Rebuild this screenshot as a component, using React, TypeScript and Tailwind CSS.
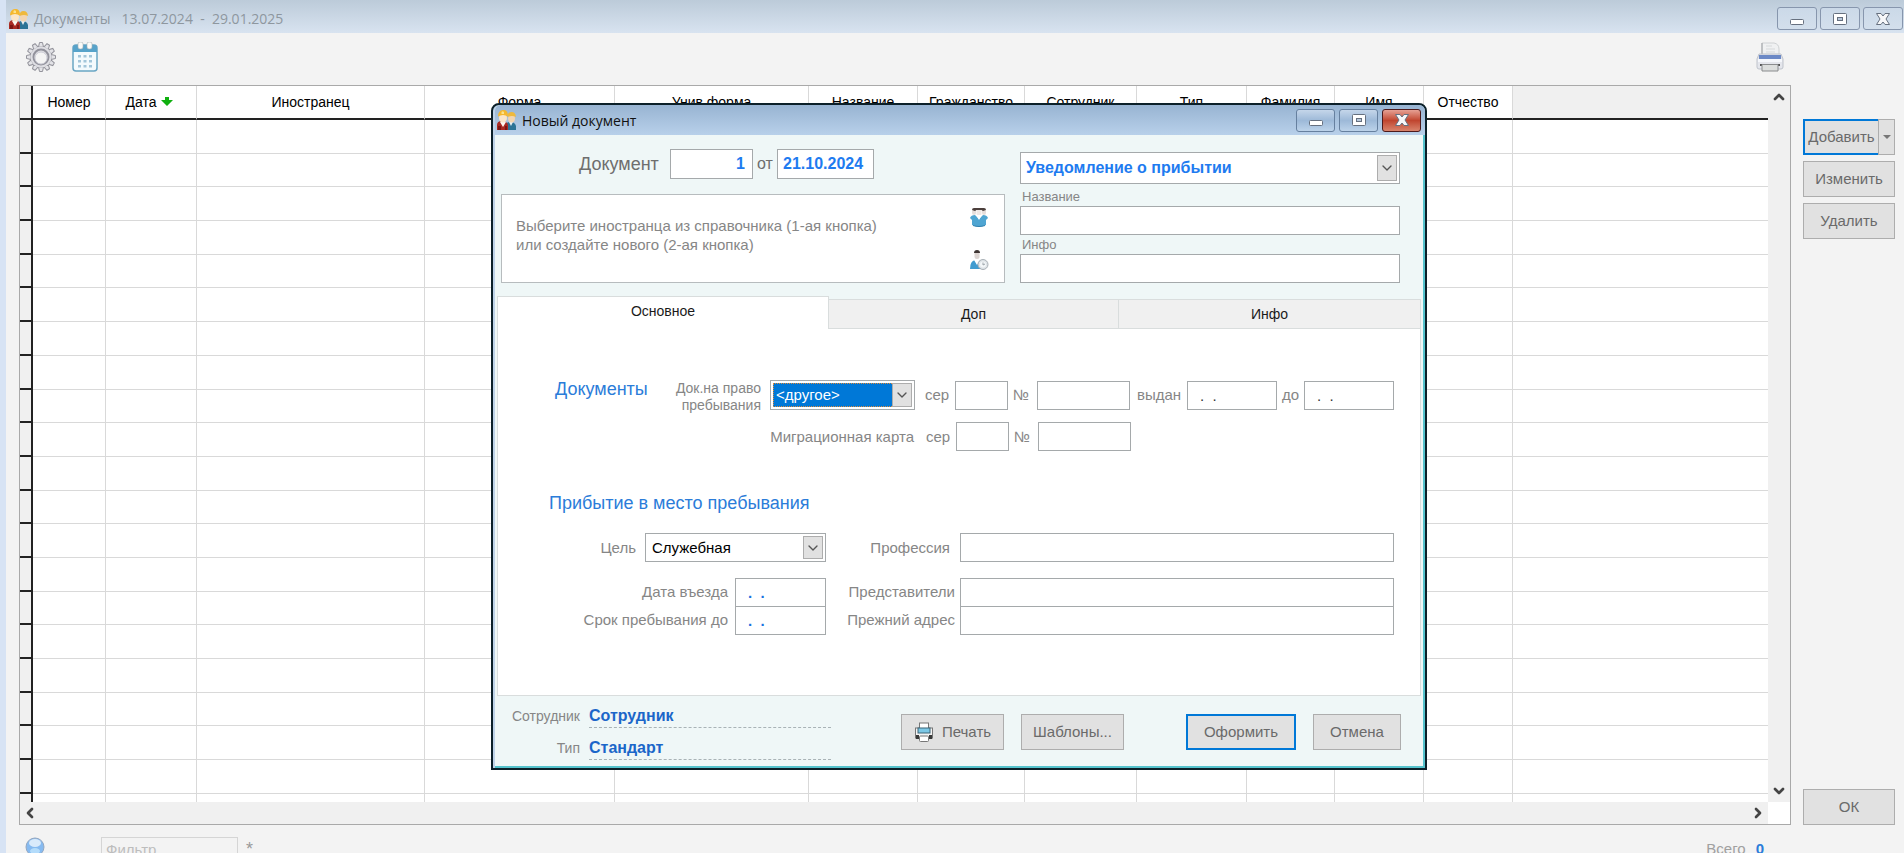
import React, { useState } from "react";
import { ChevronDown, ChevronLeft, ChevronRight, ChevronUp } from "lucide-react";

const columns = [
  { title: "Номер", width: "w-[73px]" },
  { title: "Дата", width: "w-[91px]", sorted: true },
  { title: "Иностранец", width: "w-[228px]" },
  { title: "Форма", width: "w-[190px]" },
  { title: "Унив.форма", width: "w-[194px]" },
  { title: "Название", width: "w-[109px]" },
  { title: "Гражданство", width: "w-[107px]" },
  { title: "Сотрудник", width: "w-[112px]" },
  { title: "Тип", width: "w-[110px]" },
  { title: "Фамилия", width: "w-[88px]" },
  { title: "Имя", width: "w-[89px]" },
  { title: "Отчество", width: "w-[89px]" },
];

const rows = Array.from({ length: 20 }, (_, i) => i);

const tabs = [
  { id: "main", label: "Основное", width: "w-[332px]" },
  { id: "extra", label: "Доп", width: "w-[290px]" },
  { id: "info", label: "Инфо", width: "flex-1" },
];

const field = "h-[29px] border border-[#a5a9ab] bg-white outline-none";
const label = "text-[15px] leading-[18px] text-[#868686] whitespace-nowrap";
const button =
  "h-9 border border-[#adadad] bg-[#e1e1e1] text-[15px] text-[#6a6a6a] whitespace-nowrap flex items-center justify-center";

/* ---------- Icons ---------- */

const PeopleIcon: React.FC = () => (
  <svg className="h-5 w-5 shrink-0" viewBox="0 0 20 20">
    <path d="M9 20v-5q0-3 4-3 5 0 6 4v4z" fill="#2c7396" />
    <path d="M12 12l2 4 2-4z" fill="#e9eef0" />
    <ellipse cx="14.500" cy="8.500" rx="3.500" ry="4" fill="#f3d5b0" />
    <path d="M10.500 7q0-5 4-5t4.500 5q-4-2-8.500 0z" fill="#efb93c" />
    <path d="M0 20v-5q0-4 5-4t6 4v5z" fill="#a92a22" />
    <path d="M3 12l3 5 3-5z" fill="#fdf7f0" />
    <path d="M1 16h3v4H1zM8 16h2v4H8z" fill="#7d1714" />
    <ellipse cx="6" cy="8" rx="4" ry="4.500" fill="#fbe6c9" />
    <path d="M1 6.500q0-6 5-6.500t5 6.500Q6 3.500 1 6.500z" fill="#f5b82e" />
    <path d="M4.500 2q1-1.500 2.500 0v2h-2.500z" fill="#fde28a" />
  </svg>
);

const GearIcon: React.FC = () => (
  <svg className="h-8 w-8" viewBox="0 0 32 32">
    <g fill="#e3e3e7" stroke="#93939b" strokeWidth="1">
      {[0, 30, 60, 90, 120, 150, 180, 210, 240, 270, 300, 330].map((a) => (
        <path key={a} d="M13.500 6l1-4.500h3l1 4.500z" transform={`rotate(${a} 16 16)`} />
      ))}
    </g>
    <circle cx="16" cy="16" r="10.500" fill="#dedee3" />
    <circle cx="16" cy="16" r="7.500" fill="none" stroke="#92929c" strokeWidth="2" />
    <circle cx="16" cy="17" r="6" fill="#f4f4f4" stroke="#cdcdd6" />
  </svg>
);

const CalendarIcon: React.FC = () => (
  <svg className="h-[30px] w-[26px]" viewBox="0 0 26 30">
    <rect x="1" y="3" width="24" height="26" rx="3" fill="#f3fafd" stroke="#6aa6c4" strokeWidth="1.500" />
    <path d="M1 10V6q0-3 3-3h18q3 0 3 3v4z" fill="#57a3ca" />
    <rect x="6" y="0" width="5" height="7" rx="2" fill="#fbfbf8" stroke="#a9b3b6" strokeWidth=".6" />
    <rect x="15" y="0" width="5" height="7" rx="2" fill="#fbfbf8" stroke="#a9b3b6" strokeWidth=".6" />
    {[13, 18, 23].map((y) =>
      [6, 11.5, 17].map((x) => <rect key={`${x}-${y}`} x={x} y={y} width="3" height="2.500" fill="#a3c6da" />)
    )}
  </svg>
);

const PrinterLarge: React.FC = () => (
  <svg className="h-[30px] w-7" viewBox="0 0 28 30">
    <path d="M6 1h12q5 1 5 6v6H6z" fill="#f0f1f2" stroke="#ced1d3" />
    <path d="M6 1v12" stroke="#9da1a4" />
    <path d="M10 4h6M10 7h9M10 10h9" stroke="#d6d9db" />
    <path d="M3 12h22l2 5v8q0 2-2 2H3q-2 0-2-2v-8z" fill="#e4e6ec" stroke="#bfc3cb" />
    <path d="M3 13h22v4H3z" fill="#6c89c6" />
    <path d="M2 17h24v3H2z" fill="#f5f7fb" />
    <path d="M4 22h2v2H4zM22 22h2v2h-2z" fill="#555" />
    <path d="M6 22.500h16V29H6z" fill="#dcdedd" stroke="#8a8c8e" />
  </svg>
);

const PrinterSmall: React.FC = () => (
  <svg className="h-5 w-5" viewBox="0 0 20 20">
    <rect x="1.500" y="6" width="17" height="10" fill="#f4f4f4" stroke="#777" />
    <rect x="5.500" y="1" width="9" height="6" fill="#fff" stroke="#777" />
    <rect x="4" y="6" width="12" height="5" fill="#7cc8e6" stroke="#3d6477" />
    <path d="M2 13h3v4H2zM15 13h3v4h-3z" fill="#3a3a3a" />
    <rect x="5.500" y="14" width="9" height="5.500" rx="1" fill="#fff" stroke="#777" />
  </svg>
);

const GroupIcon: React.FC = () => (
  <svg className="h-5 w-5" viewBox="0 0 20 20">
    <rect x="3" y="2" width="4" height="6" rx="2" fill="#e6dedb" />
    <rect x="13" y="2" width="4" height="6" rx="2" fill="#e6dedb" />
    <rect x="7.500" y="2" width="5" height="7" rx="2" fill="#efe8e5" />
    <path d="M3 3q0-2 2-2h10q2 0 2 2l-3 1-1.500-1h-5L6 4z" fill="#4b3f3c" />
    <path d="M1 11q1-3 5-3l4 4 4-4q4 0 5 3l-2 2v5q-7 3-14 0v-5z" fill="#4fa5d2" />
    <path d="M7 8l3 5 3-5z" fill="#fff" />
    <path d="M4 18q6 2 12 0v1q-6 2-12 0z" fill="#2f7fae" />
  </svg>
);

const PersonIcon: React.FC = () => (
  <svg className="h-5 w-5" viewBox="0 0 20 20">
    <path d="M1 19q0-8 5-9h4q4 1 4 9z" fill="#3f9bd0" />
    <path d="M5 10l3 5 3-5z" fill="#fff" />
    <rect x="5.500" y="1" width="5" height="8" rx="2.500" fill="#ddd5d2" />
    <path d="M5 3q0-3 3-3t3 3z" fill="#3f3634" />
    <circle cx="14" cy="14.500" r="5" fill="#dfe4e8" stroke="#a9b0b6" />
    <circle cx="14" cy="14.500" r="3" fill="#f3f6f8" />
    <path d="M14 12.500v2.500l2-1" fill="none" stroke="#9da5ab" />
  </svg>
);

/* ---------- Shared parts ---------- */

const MinimizeGlyph: React.FC = () => (
  <svg className="h-4 w-4" viewBox="0 0 16 16">
    <rect x="1.500" y="8.500" width="13" height="5" rx="1" fill="#fff" stroke="#66707f" />
  </svg>
);

const MaximizeGlyph: React.FC = () => (
  <svg className="h-4 w-4" viewBox="0 0 16 16">
    <rect x="1.500" y="2.500" width="13" height="11" rx="1" fill="#fff" stroke="#66707f" />
    <rect x="5.500" y="6.500" width="5" height="3" fill="#b9c9dc" stroke="#66707f" />
  </svg>
);

const CloseGlyph: React.FC = () => (
  <svg className="h-4 w-4" viewBox="0 0 16 16">
    <path
      d="M1.500 2.500h4.500l2 2.500 2-2.500h4.500L11 8l3.500 5.500H10L8 11l-2 2.500H1.500L5 8z"
      fill="#f6f7f9"
      stroke="#66707f"
    />
  </svg>
);

type SelectProps = {
  id: string;
  name: string;
  options: string[];
  className: string;
  selectClass: string;
};

const Select: React.FC<SelectProps> = ({ id, name, options, className, selectClass }) => (
  <div className={`relative border border-[#a5a9ab] bg-white p-[2px] ${className}`}>
    <select id={id} aria-label={name} className={`h-full w-full appearance-none outline-none ${selectClass}`}>
      {options.map((option) => (
        <option key={option}>{option}</option>
      ))}
    </select>
    <span className="pointer-events-none absolute inset-y-[2px] right-[2px] flex w-5 items-center justify-center border border-[#adadad] bg-[#e1e1e1]">
      <ChevronDown className="h-4 w-4 text-[#555]" />
    </span>
  </div>
);

const MainTab: React.FC = () => (
  <div className="pr-[26px]">
    <div className="mt-[51px] flex items-start">
      <h2 className="ml-[57px] w-[96px] text-lg leading-[18px] text-[#2b7cd9]">Документы</h2>
      <label htmlFor="permit" className="ml-auto w-[96px] text-right text-sm leading-[17px] text-[#868686]">
        Док.на право пребывания
      </label>
      <div className="ml-[9px] flex items-center">
        <Select
          id="permit"
          name="Док.на право пребывания"
          options={["<другое>"]}
          className="h-[30px] w-[145px]"
          selectClass="border border-dotted border-[#e08b3a] bg-[#0078d7] pl-[2px] text-[15px] text-white"
        />
        <label htmlFor="permit-series" className={`${label} ml-[10px] w-[30px]`}>сер</label>
        <input id="permit-series" className={`${field} w-[53px]`} />
        <label htmlFor="permit-number" className={`${label} ml-[5px] w-6`}>№</label>
        <input id="permit-number" className={`${field} w-[93px]`} />
        <label htmlFor="issued" className={`${label} ml-[7px] w-[50px]`}>выдан</label>
        <input id="issued" defaultValue=".  ." className={`${field} w-[90px] px-3 text-[15px] text-[#333]`} />
        <label htmlFor="valid-to" className={`${label} ml-[5px] w-[22px]`}>до</label>
        <input id="valid-to" defaultValue=".  ." className={`${field} w-[90px] px-3 text-[15px] text-[#333]`} />
      </div>
    </div>

    <div className="mt-2 flex items-center justify-end pr-[263px]">
      <span className={label}>Миграционная карта</span>
      <label htmlFor="card-series" className={`${label} ml-3 w-[30px]`}>сер</label>
      <input id="card-series" className={`${field} w-[53px]`} />
      <label htmlFor="card-number" className={`${label} ml-[5px] w-6`}>№</label>
      <input id="card-number" className={`${field} w-[93px]`} />
    </div>

    <h2 className="mt-[42px] pl-[51px] text-lg leading-5 text-[#2b7cd9]">Прибытие в место пребывания</h2>

    <div className="mt-5 flex items-center">
      <label htmlFor="purpose" className={`${label} w-[138px] text-right`}>Цель</label>
      <Select
        id="purpose"
        name="Цель"
        options={["Служебная"]}
        className="ml-[9px] h-[29px] w-[181px]"
        selectClass="bg-white pl-1 text-[15px] text-black"
      />
      <label htmlFor="profession" className={`${label} ml-3 w-[112px] text-right`}>Профессия</label>
      <input id="profession" className={`${field} ml-[10px] min-w-0 flex-1`} />
    </div>

    <div className="mt-4 flex">
      <div className="w-[230px] text-right">
        <label htmlFor="entry-date" className={`${label} block leading-[28px]`}>Дата въезда</label>
        <label htmlFor="stay-until" className={`${label} block leading-[28px]`}>Срок пребывания до</label>
      </div>
      <div className="ml-[7px] flex w-[91px] flex-col">
        <input id="entry-date" defaultValue=".  ." className={`${field} px-3 text-[15px] font-bold text-[#1a73e0]`} />
        <input id="stay-until" defaultValue=".  ." className={`${field} -mt-px px-3 text-[15px] font-bold text-[#1a73e0]`} />
      </div>
      <div className="w-[129px] text-right">
        <label htmlFor="representatives" className={`${label} block leading-[28px]`}>Представители</label>
        <label htmlFor="old-address" className={`${label} block leading-[28px]`}>Прежний адрес</label>
      </div>
      <div className="ml-[5px] flex min-w-0 flex-1 flex-col">
        <input id="representatives" className={field} />
        <input id="old-address" className={`${field} -mt-px`} />
      </div>
    </div>
  </div>
);

const DocumentDialog: React.FC = () => {
  const [activeTab, setActiveTab] = useState("main");
  const control =
    "flex h-[23px] w-[39px] items-center justify-center rounded-[3px] border border-[#66809f] bg-linear-to-b from-[#c5d6ea] via-[#9db9d8] to-[#bcd3ea]";

  return (
    <section
      role="dialog"
      aria-label="Новый документ"
      className="absolute left-[485px] top-[103px] flex h-[667px] w-[936px] flex-col rounded-t-lg border-2 border-[#0c2029] bg-[#bfd3e8] pl-[2px]"
    >
      <header className="flex h-[30px] shrink-0 items-center rounded-t-md bg-linear-to-b from-[#98b4d2] to-[#b8d0ea] pl-[2px] pr-1">
        <PeopleIcon />
        <h1 className="ml-[5px] font-['Open_Sans',sans-serif] text-[14px] text-[#111]">Новый документ</h1>
        <div className="ml-auto flex gap-1">
          <button aria-label="Свернуть" className={control}><MinimizeGlyph /></button>
          <button aria-label="Развернуть" className={control}><MaximizeGlyph /></button>
          <button
            aria-label="Закрыть"
            className="flex h-[23px] w-[39px] items-center justify-center rounded-[3px] border border-[#4d1a1c] bg-linear-to-b from-[#e5a094] via-[#c0452f] to-[#d8836c]"
          >
            <CloseGlyph />
          </button>
        </div>
      </header>

      <div className="flex min-h-0 flex-1 flex-col border-b-2 border-r-2 border-[#55c3cd] bg-[#eff7f7]">
        <div className="flex justify-between pl-[6px] pr-[23px] pt-[14px]">
          <div className="w-[504px]">
            <div className="flex items-center pl-[78px]">
              <label htmlFor="doc-number" className="w-[91px] text-lg text-[#6e6e6e]">Документ</label>
              <input
                id="doc-number"
                defaultValue="1"
                className="h-[30px] w-[83px] border border-[#a5a9ab] bg-white px-[7px] text-right text-base font-bold text-[#1e7bf0]"
              />
              <label htmlFor="doc-date" className="ml-[4px] w-[20px] text-base text-[#6e6e6e]">от</label>
              <input
                id="doc-date"
                defaultValue="21.10.2024"
                className="h-[30px] w-[97px] border border-[#a5a9ab] bg-white px-[5px] text-base font-bold text-[#1e7bf0]"
              />
            </div>
            <div className="mt-[15px] flex h-[89px] items-center justify-between border border-[#b7bcbe] bg-white pl-[14px] pr-[15px]">
              <p className="pb-2 text-[15px] leading-[19px] text-[#868686]">
                Выберите иностранца из справочника (1-ая кнопка)
                <br />
                или создайте нового (2-ая кнопка)
              </p>
              <div className="flex flex-col gap-[23px]">
                <button aria-label="Выбрать из справочника"><GroupIcon /></button>
                <button aria-label="Создать нового"><PersonIcon /></button>
              </div>
            </div>
          </div>

          <div className="w-[380px] pt-[3px]">
            <Select
              id="doc-type"
              name="Вид документа"
              options={["Уведомление о прибытии"]}
              className="h-8"
              selectClass="bg-white pl-[3px] text-base font-bold text-[#1e7bf0]"
            />
            <label htmlFor="doc-name" className="mt-1 block pl-[2px] text-[13px] leading-[18px] text-[#868686]">
              Название
            </label>
            <input id="doc-name" className={`${field} block w-full`} />
            <label htmlFor="doc-info" className="mt-px block pl-[2px] text-[13px] leading-[18px] text-[#868686]">
              Инфо
            </label>
            <input id="doc-info" className={`${field} block w-full`} />
          </div>
        </div>

        <div role="tablist" className="mt-[13px] flex items-end pl-[2px] pr-[2px] text-sm text-[#1a1a1a]">
          {tabs.map((tab) => (
            <button
              key={tab.id}
              role="tab"
              aria-selected={activeTab === tab.id}
              onClick={() => setActiveTab(tab.id)}
              className={`${tab.width} ${
                activeTab === tab.id
                  ? "h-[33px] border-x border-t border-[#d9dddd] bg-white pb-1"
                  : "h-[30px] border-b border-r border-t border-[#d9dddd] bg-[#f0f0f0]"
              }`}
            >
              {tab.label}
            </button>
          ))}
        </div>

        <div role="tabpanel" className="mx-[2px] flex-1 border-x border-b border-[#d9dddd] bg-white">
          {activeTab === "main" && <MainTab />}
        </div>

        <footer className="flex h-[70px] items-start pl-[10px] pr-[22px]">
          <dl className="grid grid-cols-[76px_1fr] gap-y-[9px] pt-[9px]">
            <dt className="pr-[1px] text-right text-sm leading-[22px] text-[#868686]">Сотрудник</dt>
            <dd className="ml-2 w-[242px] border-b border-dashed border-[#a9b3b6] text-base font-bold leading-[22px] text-[#1b66c9]">
              Сотрудник
            </dd>
            <dt className="pr-[1px] text-right text-sm leading-[22px] text-[#868686]">Тип</dt>
            <dd className="ml-2 w-[242px] border-b border-dashed border-[#a9b3b6] text-base font-bold leading-[22px] text-[#1b66c9]">
              Стандарт
            </dd>
          </dl>
          <div className="ml-auto flex pt-[18px]">
            <button className={`${button} w-[103px] gap-2`}>
              <PrinterSmall />
              Печать
            </button>
            <button className={`${button} ml-[17px] w-[103px]`}>Шаблоны...</button>
            <button className="ml-[62px] flex h-9 w-[110px] items-center justify-center border-2 border-[#0078d7] bg-[#e1e1e1] text-[15px] text-[#6a6a6a]">
              Оформить
            </button>
            <button className={`${button} ml-[17px] w-[88px]`}>Отмена</button>
          </div>
        </footer>
      </div>
    </section>
  );
};

const App: React.FC = () => {
  const control =
    "flex h-[23px] w-10 items-center justify-center rounded-[3px] border border-[#8796ad] bg-linear-to-b from-[#cbd9e8] to-[#d3dfec]";

  return (
    <main className="relative flex h-screen flex-col overflow-hidden border-l-[6px] border-[#d7e3f4] bg-[#f3f3f3] font-['Liberation_Sans',Arial,sans-serif]">
      <header className="-ml-[6px] flex h-[33px] shrink-0 items-center bg-linear-to-b from-[#bccbd9] to-[#d8e3f0] pl-[9px] pr-px pt-1">
        <PeopleIcon />
        <h1 className="ml-[5px] whitespace-pre font-['Open_Sans',sans-serif] text-[14px] text-[#8e979f]">
          {"Документы   13.07.2024  -  29.01.2025"}
        </h1>
        <div className="ml-auto flex gap-[3px]">
          <button aria-label="Свернуть" className={control}><MinimizeGlyph /></button>
          <button aria-label="Развернуть" className={control}><MaximizeGlyph /></button>
          <button aria-label="Закрыть" className={control}><CloseGlyph /></button>
        </div>
      </header>

      {/* Toolbar */}
      <div className="flex h-[52px] shrink-0 items-center pb-1 pl-[19px] pr-[120px]">
        <button aria-label="Настройки"><GearIcon /></button>
        <button aria-label="Период" className="ml-[15px]"><CalendarIcon /></button>
        <button aria-label="Печать" className="ml-auto"><PrinterLarge /></button>
      </div>

      <div className="flex min-h-0 flex-1 pl-[13px]">
        <div className="flex min-w-0 flex-1 flex-col border border-[#a9a9a9] bg-[#f0f0f0]">
          <div className="flex min-h-0 flex-1">
            <div className="min-w-0 flex-1 bg-white">
              <table className="h-full w-full table-fixed border-separate border-spacing-0 text-sm text-black">
                <thead>
                  <tr className="h-[34px]">
                    <th className="w-[13px] border-b-2 border-r-2 border-[#222] bg-[#f0f0f0]" />
                    {columns.map((column) => (
                      <th
                        key={column.title}
                        className={`${column.width} border-b-2 border-r border-b-[#222] border-r-[#d9d9d9] p-0 font-normal`}
                      >
                        {column.sorted ? (
                          <span className="inline-flex items-center gap-1 pr-1">
                            {column.title}
                            <svg className="h-3 w-3" viewBox="0 0 12 12">
                              <path d="M4 1h4v3h4l-6 6-6-6h4z" fill="#10b010" />
                            </svg>
                          </span>
                        ) : (
                          column.title
                        )}
                      </th>
                    ))}
                    <th className="border-b-2 border-[#222] bg-[#f0f0f0]" />
                  </tr>
                </thead>
                <tbody>
                  {rows.map((row) => (
                    <tr key={row}>
                      <td className="border-b-2 border-r-2 border-[#222] bg-[#f0f0f0] p-0">&nbsp;</td>
                      {columns.map((column) => (
                        <td key={column.title} className="border-b border-r border-[#d9d9d9] p-0" />
                      ))}
                      <td className="border-b border-[#d9d9d9] p-0" />
                    </tr>
                  ))}
                  <tr className="h-2">
                    <td className="border-r-2 border-[#222] bg-[#f0f0f0] p-0" />
                    {columns.map((column) => (
                      <td key={column.title} className="border-r border-[#d9d9d9] p-0" />
                    ))}
                    <td className="p-0" />
                  </tr>
                </tbody>
              </table>
            </div>
            <div className="flex w-[22px] flex-col items-center justify-between py-[3px] text-[#444]">
              <ChevronUp className="h-4 w-4" strokeWidth={4} />
              <ChevronDown className="h-4 w-4" strokeWidth={4} />
            </div>
          </div>
          <div className="flex h-[22px] shrink-0 items-center text-[#444]">
            <div className="flex flex-1 items-center justify-between px-[2px]">
              <ChevronLeft className="h-4 w-4" strokeWidth={4} />
              <ChevronRight className="h-4 w-4" strokeWidth={4} />
            </div>
            <div className="h-full w-[22px] bg-white" />
          </div>
        </div>

        <aside className="flex w-[113px] flex-col gap-[6px] pl-3 pr-[9px] pt-[34px]">
          <div className="flex">
            <button className="h-9 flex-1 border-2 border-r-0 border-[#0078d7] bg-[#e1e1e1] text-[15px] text-[#6a6a6a]">
              Добавить
            </button>
            <button
              aria-label="Варианты добавления"
              className="flex h-9 w-[17px] items-center justify-center border border-[#adadad] bg-[#e1e1e1]"
            >
              <svg className="h-2 w-2" viewBox="0 0 8 8">
                <path d="M0 2h8L4 6z" fill="#777" />
              </svg>
            </button>
          </div>
          <button className={button}>Изменить</button>
          <button className={button}>Удалить</button>
          <button className={`${button} mt-auto`}>ОК</button>
        </aside>
      </div>

      <footer className="flex h-7 shrink-0 items-start overflow-hidden pl-[19px] pr-[140px] pt-3">
        <svg className="h-5 w-5 shrink-0" viewBox="0 0 20 20">
          <circle cx="10" cy="10" r="9" fill="#86baf0" stroke="#93a7c0" />
          <ellipse cx="10" cy="6" rx="6" ry="4" fill="#d9eafb" />
          <ellipse cx="10" cy="14" rx="5" ry="3" fill="#b4dcfb" />
        </svg>
        <input
          aria-label="Фильтр"
          placeholder="Фильтр"
          className="ml-[56px] h-6 w-[137px] shrink-0 border border-[#d5d5d5] bg-transparent px-1 text-[15px] placeholder:text-[#bdbdbd]"
        />
        <span className="ml-2 text-lg leading-6 text-[#9a9a9a]">*</span>
        <span className="ml-auto text-[15px] leading-6 text-[#a0a0a0]">Всего</span>
        <span className="ml-[10px] text-[15px] font-bold leading-6 text-[#2b7cd9]">0</span>
      </footer>

      <DocumentDialog />
    </main>
  );
};

export default App;
